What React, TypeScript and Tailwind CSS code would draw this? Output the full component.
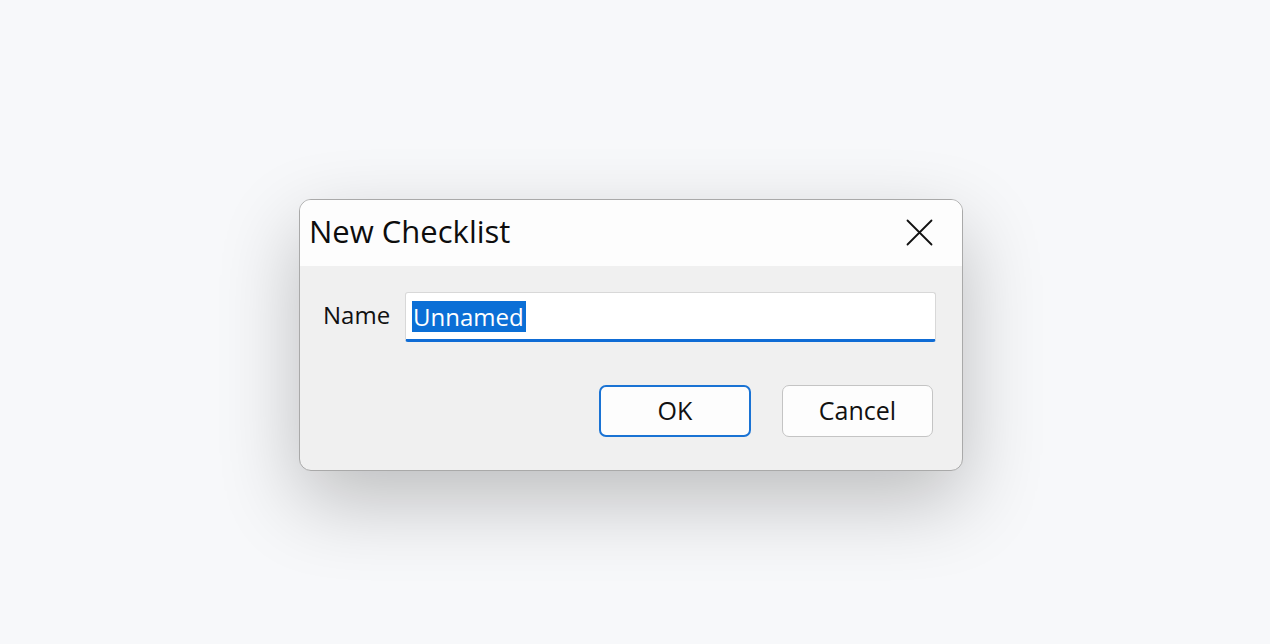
export default function App() {
  return (
    <div
      className="w-[1270px] h-[644px] bg-[#f7f8fa] pt-[199px] pl-[299px] overflow-hidden"
      style={{ fontFamily: '"Open Sans", "Noto Sans", sans-serif' }}
    >
      <div className="w-[664px] h-[272px] rounded-[12px] border border-[#a9a9a9] bg-[#f0f0f0] overflow-hidden shadow-[0_30px_80px_rgba(0,0,0,0.24)] flex flex-col">
        {/* title bar */}
        <div className="h-[66px] bg-[#fdfdfd] flex items-center justify-between pl-[9px] pr-[29px]">
          <span className="text-[31px] leading-[36px] text-[#0d0d0d] -mt-[4px]">New Checklist</span>
          <svg width="27" height="27" viewBox="0 0 27 27" className="-mt-[2px]">
            <path d="M1.5 1.5 L25.5 25.5 M25.5 1.5 L1.5 25.5" stroke="#111" strokeWidth="1.8" strokeLinecap="round" />
          </svg>
        </div>

        <div className="flex-1 flex flex-col pl-[23px] pr-[25px] pt-[26px]">
          <div className="flex items-center">
            <span className="w-[82px] text-[24px] text-[#111] -mt-[4px]">Name</span>
            <div className="w-[531px] h-[50px] bg-white border border-[#d8d8d8] border-b-[3px] border-b-[#0f6cd5] rounded-[3px] flex items-center pl-[6px]">
              <span className="bg-[#0b6fd6] text-white text-[24px] leading-[31px] px-[1px] pr-[2px]">Unnamed</span>
            </div>
          </div>

          <div className="flex justify-end gap-[31px] mt-[43px] pr-[4px]">
            <button className="w-[152px] h-[52px] rounded-[7px] bg-[#fdfdfd] border-2 border-[#1a73d4] text-[25px] text-[#111]">
              OK
            </button>
            <button className="w-[151px] h-[52px] rounded-[7px] bg-[#fdfdfd] border border-[#c4c4c4] text-[25px] text-[#111]">
              Cancel
            </button>
          </div>
        </div>
      </div>
    </div>
  );
}
